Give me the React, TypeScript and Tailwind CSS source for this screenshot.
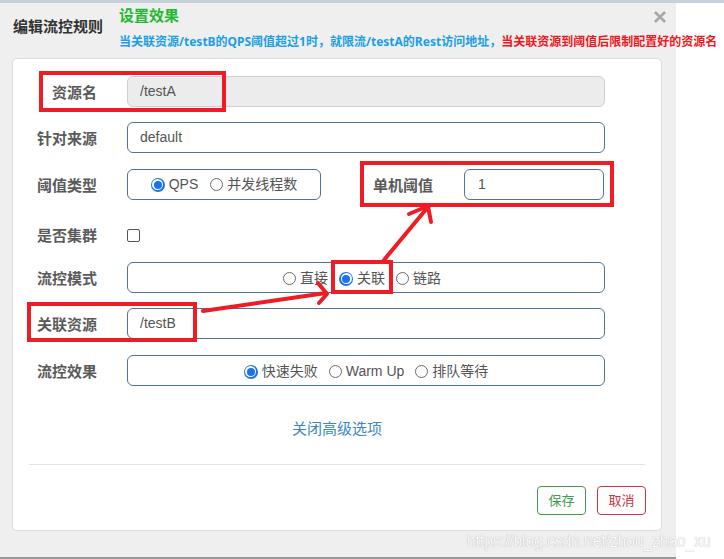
import React from "react";

const Radio = ({ checked }: { checked?: boolean }) =>
  checked ? (
    <span className="w-[14px] h-[14px] rounded-full bg-[#1a73e8] flex items-center justify-center shrink-0">
      <span className="w-[11px] h-[11px] rounded-full bg-white flex items-center justify-center">
        <span className="w-[8px] h-[8px] rounded-full bg-[#1a73e8]" />
      </span>
    </span>
  ) : (
    <span className="w-[13px] h-[13px] rounded-full border border-[#6b6b6b] bg-white shrink-0" />
  );

const RadioItem = ({ checked, label }: { checked?: boolean; label: string }) => (
  <span className="flex items-center gap-[4px]">
    <Radio checked={checked} />
    <span>{label}</span>
  </span>
);

const Label = ({ children }: { children: React.ReactNode }) => (
  <div className="w-[84px] text-right text-[15px] font-semibold text-[#5a5a5a] shrink-0 leading-[20px] mt-[2px]">{children}</div>
);

export default function App() {
  return (
    <div
      className="relative w-[724px] h-[559px] bg-white overflow-hidden"
      style={{ fontFamily: "'Liberation Sans', 'Noto Sans CJK SC', sans-serif" }}
    >
      <div className="h-[3px] bg-[#c8d0dc]" />
      <div className="w-[676px] h-[556px] bg-[#efefef] border-b-2 border-[#999] flex flex-col">
        {/* header */}
        <div className="h-[55px] flex shrink-0">
          <div className="w-[106px] pl-[13px] pt-[14px] text-[15px] leading-[20px] text-[#333] font-semibold shrink-0 whitespace-nowrap">
            编辑流控规则
          </div>
          <div className="ml-[13px] flex flex-col w-0">
            <div className="mt-[3px] text-[15px] leading-[20px] font-bold text-[#22b930] whitespace-nowrap">设置效果</div>
            <div className="mt-[8px] text-[12px] leading-[16px] font-bold whitespace-nowrap font-['Noto_Sans','Noto_Sans_CJK_SC',sans-serif]">
              <span className="text-[#1a9ee6]">当关联资源/testB的QPS阈值超过1时，就限流/testA的Rest访问地址，</span>
              <span className="text-[#f01820]">当关联资源到阈值后限制配置好的资源名</span>
            </div>
          </div>
        </div>

        {/* card */}
        <div className="ml-[12px] w-[650px] h-[473px] bg-white border border-[#dcdcdc] rounded-[5px] flex flex-col pt-[17px]">
          {/* row 1 */}
          <div className="flex items-center h-[31px] mb-[15px]">
            <Label>资源名</Label>
            <div className="ml-[30px] w-[478px] h-[31px] rounded-[6px] border border-[#cfcfcf] bg-[#ececec] flex items-center px-[12px] text-[14px] text-[#555]">
              /testA
            </div>
          </div>
          {/* row 2 */}
          <div className="flex items-center h-[31px] mb-[16px]">
            <Label>针对来源</Label>
            <div className="ml-[30px] w-[478px] h-[31px] rounded-[6px] border border-[#4f7496] bg-white flex items-center px-[12px] text-[14px] text-[#555]">
              default
            </div>
          </div>
          {/* row 3 */}
          <div className="flex items-center h-[31px] mb-[20px]">
            <Label>阈值类型</Label>
            <div className="ml-[30px] w-[194px] h-[31px] rounded-[6px] border border-[#4f7496] bg-white flex items-center justify-center gap-[12px] text-[14px] text-[#555]">
              <RadioItem checked label="QPS" />
              <RadioItem label="并发线程数" />
            </div>
            <div className="ml-[52px] w-[61px] text-[15px] font-semibold text-[#5a5a5a] leading-[20px] whitespace-nowrap mt-[2px]">单机阈值</div>
            <div className="ml-[30px] w-[140px] h-[31px] rounded-[6px] border border-[#4f7496] bg-white flex items-center px-[13px] text-[14px] text-[#555]">
              1
            </div>
          </div>
          {/* row 4 */}
          <div className="flex items-center h-[30px] mb-[12px]">
            <Label>是否集群</Label>
            <div className="ml-[30px] w-[13px] h-[13px] rounded-[2px] border border-[#555] bg-white" />
          </div>
          {/* row 5 */}
          <div className="flex items-center h-[31px] mb-[15px]">
            <Label>流控模式</Label>
            <div className="ml-[30px] w-[478px] h-[31px] rounded-[6px] border border-[#4f7496] bg-white flex items-center justify-center gap-[11px] pr-[8px] pt-[2px] text-[14px] text-[#555]">
              <RadioItem label="直接" />
              <RadioItem checked label="关联" />
              <RadioItem label="链路" />
            </div>
          </div>
          {/* row 6 */}
          <div className="flex items-center h-[31px] mb-[16px]">
            <Label>关联资源</Label>
            <div className="ml-[30px] w-[478px] h-[31px] rounded-[6px] border border-[#4f7496] bg-white flex items-center px-[12px] text-[14px] text-[#555]">
              /testB
            </div>
          </div>
          {/* row 7 */}
          <div className="flex items-center h-[31px]">
            <Label>流控效果</Label>
            <div className="ml-[30px] w-[478px] h-[31px] rounded-[6px] border border-[#4f7496] bg-white flex items-center justify-center gap-[11px] pt-[2px] text-[14px] text-[#555]">
              <RadioItem checked label="快速失败" />
              <RadioItem label="Warm Up" />
              <RadioItem label="排队等待" />
            </div>
          </div>

          <div className="mt-[32px] h-[21px] text-center text-[15px] leading-[21px] text-[#3a87c4]">关闭高级选项</div>

          <div className="mt-[25px] mx-[16px] h-px bg-[#e3e3e3]" />

          <div className="mt-[21px] flex justify-end gap-[11px] pr-[15px]">
            <div className="w-[49px] h-[29px] rounded-[4px] border border-[#3d9c4c] text-[#3d9c4c] text-[13px] flex items-center justify-center">
              保存
            </div>
            <div className="w-[49px] h-[29px] rounded-[4px] border border-[#cc3344] text-[#cc3344] text-[13px] flex items-center justify-center">
              取消
            </div>
          </div>
        </div>
      </div>

      {/* close icon */}
      <svg className="absolute left-[654px] top-[11px]" width="12" height="12" viewBox="0 0 12 12">
        <path d="M1 1 L11 11 M11 1 L1 11" stroke="#a8a8a8" strokeWidth="2.6" />
      </svg>

      {/* red annotations */}
      <div className="absolute left-[39px] top-[71px] w-[187px] h-[41px] border-[4px] border-[#ee1c25]" />
      <div className="absolute left-[360px] top-[161px] w-[254px] h-[46px] border-[4px] border-[#ee1c25]" />
      <div className="absolute left-[331px] top-[260px] w-[62px] h-[34px] border-[4px] border-[#ee1c25]" />
      <div className="absolute left-[27px] top-[302px] w-[170px] h-[40px] border-[4px] border-[#ee1c25]" />
      <svg className="absolute left-0 top-0 pointer-events-none" width="724" height="559">
        <g stroke="#ee1c25" strokeWidth="4" fill="none" strokeLinecap="round" strokeLinejoin="round">
          <path d="M203 311 L326 293" />
          <path d="M318 283 L327 294 L319 303" />
          <path d="M384 260 L428 207" />
          <path d="M409 214 L428 206 L431 222" />
        </g>
      </svg>

      {/* watermark */}
      <div className="absolute left-[467px] top-[530px] text-[18px] leading-[22px] whitespace-nowrap text-[#fbfbfb] origin-left scale-x-[0.86] [text-shadow:0_0_1px_rgba(0,0,0,0.35)]">
        https://blog.csdn.net/zhou_zhao_xu
      </div>
    </div>
  );
}
